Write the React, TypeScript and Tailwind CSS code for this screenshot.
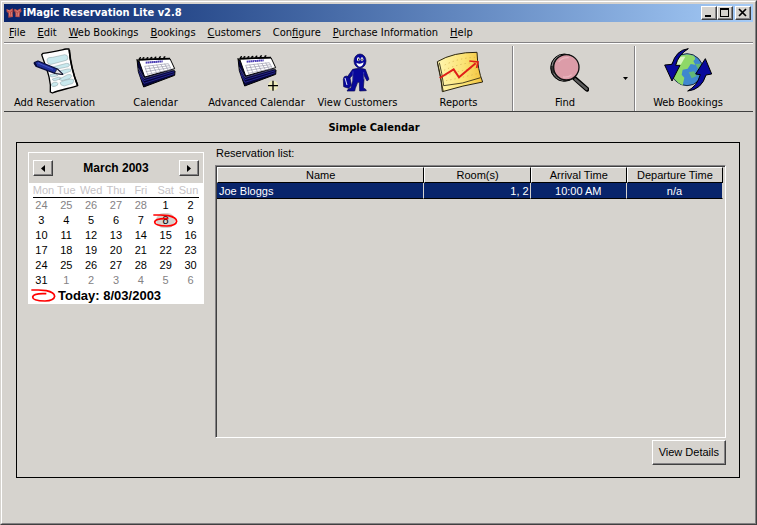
import React from 'react';

const menus = [
  { key: 'F', rest: 'ile' },
  { key: 'E', rest: 'dit' },
  { key: 'W', rest: 'eb Bookings' },
  { key: 'B', rest: 'ookings' },
  { key: 'C', rest: 'ustomers' },
  { before: 'Con', key: 'f', rest: 'igure' },
  { key: 'P', rest: 'urchase Information' },
  { key: 'H', rest: 'elp' },
];

const weekDays = ['Mon', 'Tue', 'Wed', 'Thu', 'Fri', 'Sat', 'Sun'];

const weeks = [
  [24, 25, 26, 27, 28, 1, 2],
  [3, 4, 5, 6, 7, 8, 9],
  [10, 11, 12, 13, 14, 15, 16],
  [17, 18, 19, 20, 21, 22, 23],
  [24, 25, 26, 27, 28, 29, 30],
  [31, 1, 2, 3, 4, 5, 6],
];

const isOtherMonth = (week: number, day: number) =>
  (week === 0 && day > 20) || (week === 5 && day < 10);

const raised =
  'bg-[#d6d3ce] border border-t-white border-l-white border-r-[#404040] border-b-[#404040] shadow-[inset_-1px_-1px_0_#848284]';

const LogoIcon: React.FC = () => (
  <svg viewBox="0 0 48 30" className="w-4 h-[10px]" aria-hidden="true">
    <path d="M1 3 L10 6 L20 1 L23 10 L20 14 L21 27 L7 29 L7 15 L2 12 Z" fill="#b94a48" />
    <path d="M25 2 L34 6 L44 1 L47 10 L42 15 L41 28 L28 27 L28 14 L24 10 Z" fill="#b94a48" />
    <path d="M4 6 L12 10 L18 5 M10 13 L12 25 M17 12 L17 25 M28 6 L34 11 L42 6 M32 14 L33 25 M38 13 L37 25" stroke="#eaa08f" strokeWidth="2" fill="none" />
    <path d="M22 3 L22 18 M25 10 L25 20" stroke="#3d2440" strokeWidth="2" />
  </svg>
);

const AddReservationIcon: React.FC = () => (
  <svg viewBox="87 12 144 144" className="size-12" aria-hidden="true">
    <path d="M123 34 C145 32 165 27 192 21 L201 21 C203 45 211 90 227 131 C200 140 174 143 151 153 L145 150 C149 112 131 75 119 38 Z" fill="#fdfdfd" stroke="#000" strokeWidth="4" strokeLinejoin="round" />
    <path d="M202 24 C205 60 214 98 227 131" fill="none" stroke="#000" strokeWidth="5" />
    <g fill="#c9e9ee" stroke="#8a9ea2" strokeWidth="1.5">
      <path d="M135 52 Q138 45 152 46 L188 38 Q197 38 197 46 Q199 55 189 56 L147 67 Q135 68 135 52 Z" />
      <path d="M151 75 L194 64 Q204 64 202 71 Q200 75 190 76 L160 82 Q152 82 151 75 Z" />
      <path d="M170 87 L197 81 Q209 80 207 87 L184 96 Q174 96 170 87 Z" />
      <path d="M144 98 L161 95 L168 101 L150 105 Q142 104 144 98 Z" />
      <path d="M151 111 L171 105 L179 109 L160 116 Q152 118 151 111 Z" />
      <path d="M171 112 Q178 108 197 98 Q209 95 209 103 L203 110 L180 116 Z" />
      <path d="M174 122 Q180 116 207 111 Q217 111 215 118 Q214 127 202 127 L187 132 Q174 130 174 122 Z" />
      <ellipse cx="158" cy="127" rx="10" ry="6" transform="rotate(-15 158 127)" />
    </g>
    <path d="M97 62 L108 57 L166 81 L182 97 L159 94 L103 73 Z" fill="#20309c" stroke="#080c3c" strokeWidth="4" strokeLinejoin="round" />
    <path d="M165 81 L182 97 L158 94 Z" fill="#dcdce4" stroke="#111" strokeWidth="2" />
    <path d="M108 63 L153 82" stroke="#4656c0" strokeWidth="3" />
    <path d="M97 62 L103 72" stroke="#070a36" strokeWidth="6" />
  </svg>
);

const CalendarPad: React.FC = () => (
  <>
    <path d="M408 49 L412 86 L428 132 L521 97 L522 84 L410 55 Z" fill="#05053c" stroke="#000" strokeWidth="3" strokeLinejoin="round" />
    <path d="M413 86 L429 113 L520 86 M416 96 L429 121 L520 92" stroke="#2b2b96" strokeWidth="2.5" fill="none" />
    <path d="M412 76 L429 106 L521 80" stroke="#8284a8" strokeWidth="1.5" fill="none" />
    <path d="M413 51 L507 47 L521 77 L431 102 Z" fill="#fff" stroke="#000" strokeWidth="3" strokeLinejoin="round" />
    <path d="M434 59 L485 55" stroke="#4a3cb4" strokeWidth="6" strokeDasharray="5 1" />
    <path d="M431 70 L502 62 M432 78 L505 68 M434 86 L508 74 M438 94 L510 80 M431 70 L440 95 M443 68 L452 91 M455 66 L466 88 M467 65 L478 86 M479 63 L490 83 M491 62 L501 81 M502 62 L511 79" stroke="#8e8ea2" strokeWidth="1.8" fill="none" />
    <path d="M412 50 L507 47" stroke="#000" strokeWidth="5" />
    <path d="M417 51 Q414 44 420 44 M427 51 Q424 43 430 44 M439 50 Q436 43 442 44 M450 49 Q448 42 454 44 M463 49 Q460 42 466 43 M476 48 Q473 41 480 42 M490 47 Q487 40 493 42" stroke="#000" strokeWidth="4" fill="none" />
  </>
);

const CalendarIcon: React.FC = () => (
  <svg viewBox="393 9 144 144" className="size-12" aria-hidden="true">
    <CalendarPad />
  </svg>
);

const AdvancedCalendarIcon: React.FC = () => (
  <svg viewBox="393 12 144 144" className="size-12" aria-hidden="true">
    <CalendarPad />
    <circle cx="513" cy="131" r="15" fill="#f6f3b4" opacity="0.7" />
    <path d="M498 131 H528 M513 116 V146" stroke="#000" strokeWidth="4" />
  </svg>
);

const CustomerIcon: React.FC = () => (
  <svg viewBox="396 12 144 144" className="size-12" aria-hidden="true">
    <g fill="#08089a" stroke="#04044e" strokeWidth="2">
      <ellipse cx="474" cy="57" rx="18" ry="21" />
      <path d="M452 82 Q474 76 490 82 L501 112 L495 117 L484 96 L486 113 L484 138 Q493 141 493 146 L473 147 L472 121 L467 121 L460 139 L458 147 L435 147 Q437 140 447 138 L452 118 L453 98 L443 109 L435 106 Z" />
      <path d="M424 112 Q425 102 433 102 L444 108 L448 130 L440 139 L425 134 Z" />
    </g>
    <path d="M429 108 L435 129" stroke="#dfe3f6" strokeWidth="3" />
    <path d="M453 88 L452 117 M485 90 L485 112" stroke="#6d70d4" strokeWidth="1.5" />
    <ellipse cx="469" cy="52" rx="4" ry="6" fill="#fff" />
    <ellipse cx="480" cy="52" rx="4" ry="6" fill="#fff" />
    <path d="M470 50 V56 M480 50 V56" stroke="#000" strokeWidth="3" />
    <path d="M463 62 Q474 69 485 61 Q482 74 474 74 Q466 73 463 62 Z" fill="#fff" />
  </svg>
);

const ReportsIcon: React.FC = () => (
  <svg viewBox="105 12 144 144" className="size-12" aria-hidden="true">
    <defs>
      <linearGradient id="paper" x1="0" y1="0" x2="1" y2="0">
        <stop offset="0" stopColor="#fff6b0" />
        <stop offset="0.6" stopColor="#fbe272" />
        <stop offset="1" stopColor="#f2c23c" />
      </linearGradient>
    </defs>
    <path d="M112 59 Q160 30 231 31 Q233 84 248 120 Q190 130 127 149 Q125 110 112 59 Z" fill="url(#paper)" stroke="#2a2410" strokeWidth="3" strokeLinejoin="round" />
    <path d="M118 62 Q126 93 131 131 Q188 127 242 107 M130 149 Q122 110 112 62" fill="none" stroke="#2a2410" strokeWidth="2.5" />
    <path d="M134 69 Q176 48 225 46 M132 85 Q176 64 227 61 M136 101 Q180 84 230 78 M138 116 Q186 107 235 94" fill="none" stroke="#cba94c" strokeWidth="2" strokeDasharray="4 9" />
    <path d="M119 108 L161 82 L177 106 L227 64" fill="none" stroke="#e01f18" strokeWidth="6" />
    <path d="M208 57 L234 60 L230 78" fill="none" stroke="#e01f18" strokeWidth="5" />
  </svg>
);

const FindIcon: React.FC = () => (
  <svg viewBox="426 12 144 144" className="size-12" aria-hidden="true">
    <path d="M525 107 L564 142" stroke="#000" strokeWidth="14" strokeLinecap="round" />
    <path d="M529 112 L563 141" stroke="#5b5b5b" strokeWidth="7" strokeLinecap="round" />
    <ellipse cx="496" cy="77" rx="41" ry="41" fill="#333" stroke="#000" strokeWidth="3" />
    <path d="M459 72 Q463 47 486 39 M464 94 Q474 112 493 115" stroke="#888" strokeWidth="3" fill="none" />
    <circle cx="502" cy="76" r="38" fill="#dc9ca8" stroke="#111" strokeWidth="4" />
    <path d="M479 60 Q489 45 509 47 M492 105 Q507 107 518 98" stroke="#e9b6bf" strokeWidth="4" fill="none" />
  </svg>
);

const WebIcon: React.FC = () => (
  <svg viewBox="795 12 144 144" className="size-12" aria-hidden="true">
    <circle cx="864" cy="83" r="48" fill="#3f87cf" stroke="#1c2d40" strokeWidth="3" />
    <path d="M837 45 Q858 32 883 41 Q894 49 883 57 L889 68 L875 66 L866 80 L851 83 L848 98 L856 107 L851 130 Q820 115 817 88 Q818 61 837 45 Z" fill="#8ed868" />
    <path d="M827 56 Q844 41 859 44 L846 67 Q830 78 822 75 Z" fill="#d8f3c0" />
    <path d="M889 66 L907 65 Q912 76 910 91 L897 81 Z M869 91 L885 88 L893 102 L878 109 Z" fill="#62b676" />
    <path d="M868 20 Q831 24 819 67 L797 69 L819 117 L843 70 L830 70 Q838 38 868 20 Z" fill="#08089c" stroke="#000" strokeWidth="3" strokeLinejoin="round" />
    <path d="M866 147 Q908 143 921 99 L938 96 L919 50 L890 96 L904 98 Q894 132 866 147 Z" fill="#08089c" stroke="#000" strokeWidth="3" strokeLinejoin="round" />
  </svg>
);

const TodayMark: React.FC = () => (
  <svg viewBox="0 0 75 45" className="w-[25px] h-[15px]" aria-hidden="true">
    <path d="M1 6 H22 L46 8 Q70 13 71 25 Q69 38 42 39 Q5 39 5 27 Q7 15 46 17" fill="none" stroke="#f00" strokeWidth="5" />
  </svg>
);

interface ToolButtonProps {
  label: string;
  className?: string;
  children: React.ReactNode;
}

const ToolButton: React.FC<ToolButtonProps> = ({ label, className = 'w-[101px]', children }) => (
  <button className={`flex flex-col items-center gap-px whitespace-nowrap ${className}`}>
    {children}
    <span className="leading-4">{label}</span>
  </button>
);

const Separator: React.FC = () => <div className="w-[2px] self-stretch bg-[#848284] border-r border-white" />;

const TitleBar: React.FC = () => (
  <header className="flex items-center h-[18px] pl-[2px] pr-[2px] bg-linear-to-r from-[#08246b] to-[#a5cbf7]">
    <LogoIcon />
    <h1 className="ml-px grow font-bold text-white leading-4">iMagic Reservation Lite v2.8</h1>
    <button aria-label="Minimize" className={`w-4 h-[14px] flex items-center justify-center ${raised}`}>
      <svg viewBox="0 0 12 10" className="w-3 h-[10px]"><path d="M2 7 H8 V9 H2 Z" /></svg>
    </button>
    <button aria-label="Maximize" className={`w-4 h-[14px] flex items-center justify-center ${raised}`}>
      <svg viewBox="0 0 12 10" className="w-3 h-[10px]"><path d="M1 0 H10 V9 H1 Z M2 2 V8 H9 V2 Z" fillRule="evenodd" /></svg>
    </button>
    <button aria-label="Close" className={`ml-[2px] w-4 h-[14px] flex items-center justify-center ${raised}`}>
      <svg viewBox="0 0 12 10" className="w-3 h-[10px]"><path d="M2 1 L9 8 M9 1 L2 8" stroke="#000" strokeWidth="1.7" /></svg>
    </button>
  </header>
);

const MenuBar: React.FC = () => (
  <nav className="flex gap-3 px-[5px] pb-px pt-[3px] border-b border-[#848284] whitespace-nowrap">
    {menus.map((menu) => (
      <button key={menu.key + menu.rest} className="leading-4">
        {menu.before}
        <span className="underline">{menu.key}</span>
        {menu.rest}
      </button>
    ))}
  </nav>
);

const Toolbar: React.FC = () => (
  <div className="flex border-t border-t-white border-b border-b-[#404040] pt-[2px]">
    <ToolButton label="Add Reservation"><AddReservationIcon /></ToolButton>
    <ToolButton label="Calendar"><CalendarIcon /></ToolButton>
    <ToolButton label="Advanced Calendar"><AdvancedCalendarIcon /></ToolButton>
    <ToolButton label="View Customers"><CustomerIcon /></ToolButton>
    <ToolButton label="Reports"><ReportsIcon /></ToolButton>
    <div className="flex ml-[3px]">
      <Separator />
      <ToolButton label="Find" className="w-[102px]"><FindIcon /></ToolButton>
      <button aria-label="Find options" className="w-[18px] flex items-center justify-center">
        <svg viewBox="0 0 5 3" className="w-[5px] h-[3px]"><path d="M0 0 H5 L2.5 3 Z" /></svg>
      </button>
      <Separator />
    </div>
    <ToolButton label="Web Bookings" className="w-[104px]"><WebIcon /></ToolButton>
  </div>
);

const Calendar: React.FC = () => (
  <section className="w-44 shrink-0 bg-white pt-px px-px pb-px">
    <div className="flex items-center justify-between h-[30px] px-1 bg-[#d6d3ce]">
      <button aria-label="Previous month" className={`w-5 h-4 flex items-center justify-center ${raised}`}>
        <svg viewBox="0 0 4 7" className="w-1 h-[7px]"><path d="M4 0 V7 L0 3.5 Z" /></svg>
      </button>
      <h3 className="text-[12px] font-bold">March 2003</h3>
      <button aria-label="Next month" className={`w-5 h-4 flex items-center justify-center ${raised}`}>
        <svg viewBox="0 0 4 7" className="w-1 h-[7px]"><path d="M0 0 V7 L4 3.5 Z" /></svg>
      </button>
    </div>
    <table className="w-full table-fixed border-collapse text-center">
      <thead>
        <tr className="h-[15px] text-[#c6c3c6]">
          {weekDays.map((day) => (
            <th key={day} className="group p-0 font-normal leading-[14px]">
              <div className="border-b border-black group-first:ml-1 group-last:mr-1">
                <div className="-mx-1">{day}</div>
              </div>
            </th>
          ))}
        </tr>
      </thead>
      <tbody>
        {weeks.map((week, i) => (
          <tr key={i} className="h-[15px]">
            {week.map((day) => (
              <td key={day} className={`p-0 leading-[15px] ${isOtherMonth(i, day) ? 'text-[#848284]' : 'text-black'}`}>
                {i === 1 && day === 8 ? (
                  <div className="relative">
                    <span className="block mx-[3px] rounded-full bg-[#d6d3ce]">{day}</span>
                    <div className="absolute inset-0"><TodayMark /></div>
                  </div>
                ) : (
                  day
                )}
              </td>
            ))}
          </tr>
        ))}
      </tbody>
    </table>
    <button className="flex items-center gap-[2px] pl-[2px] text-[13px] font-bold leading-[15px] whitespace-nowrap">
      <TodayMark />
      Today: 8/03/2003
    </button>
  </section>
);

const headCell = 'p-0 h-4 font-normal leading-[14px] border-t border-l border-t-white border-l-white border-r border-b border-r-black border-b-black';
const bodyCell = 'h-4 py-0 leading-[14px] border-b border-b-black border-r border-r-[#d6d3ce]';

const ReservationList: React.FC = () => (
  <div className="flex flex-col grow min-w-0">
    <h3 className="leading-3 pb-[6px] pl-px">Reservation list:</h3>
    <div className="grow border border-t-[#848284] border-l-[#848284] border-r-white border-b-white">
      <div className="h-full border-t border-l border-[#404040] pr-[2px]">
        <table className="w-full table-fixed border-separate border-spacing-0">
          <colgroup>
            <col className="w-[41%]" />
            <col className="w-[21%]" />
            <col className="w-[19%]" />
            <col className="w-[19%]" />
          </colgroup>
          <thead>
            <tr>
              <th className={headCell}>Name</th>
              <th className={headCell}>Room(s)</th>
              <th className={headCell}>Arrival Time</th>
              <th className={headCell}>Departure Time</th>
            </tr>
          </thead>
          <tbody>
            <tr className="bg-[#08246b] text-white">
              <td className={`${bodyCell} pl-[2px]`}>Joe Bloggs</td>
              <td className={`${bodyCell} pr-px text-right`}>1, 2</td>
              <td className={`${bodyCell} px-0 text-center`}>10:00 AM</td>
              <td className={`${bodyCell} px-0 text-center`}>n/a</td>
            </tr>
          </tbody>
        </table>
      </div>
    </div>
  </div>
);

const App: React.FC = () => {
  return (
    <div className='min-h-screen flex flex-col bg-[#d6d3ce] text-black font-["DejaVu_Sans_Condensed","DejaVu_Sans",sans-serif] text-[11px] border-t border-l border-t-[#d6d3ce] border-l-[#d6d3ce] border-r border-b border-r-[#404040] border-b-[#404040]'>
      <div className="grow flex flex-col border border-t-white border-l-white border-r-[#848284] border-b-[#848284] p-[2px]">
        <TitleBar />
        <MenuBar />
        <Toolbar />
        <main className="grow flex flex-col pl-3 pr-[13px] pt-2 pb-[43px]">
          <h2 className="text-center font-bold leading-4 pr-2">Simple Calendar</h2>
          <div className='grow flex flex-col mt-[6px] border border-black pl-[11px] pr-[13px] pt-1 pb-3 font-["Liberation_Sans",sans-serif]'>
            <div className="grow flex gap-[11px]">
              <div className="pt-[5px]">
                <Calendar />
              </div>
              <ReservationList />
            </div>
            <button className={`self-end mt-[2px] px-[6px] h-[25px] whitespace-nowrap ${raised}`}>View Details</button>
          </div>
        </main>
      </div>
    </div>
  );
};

export default App;
